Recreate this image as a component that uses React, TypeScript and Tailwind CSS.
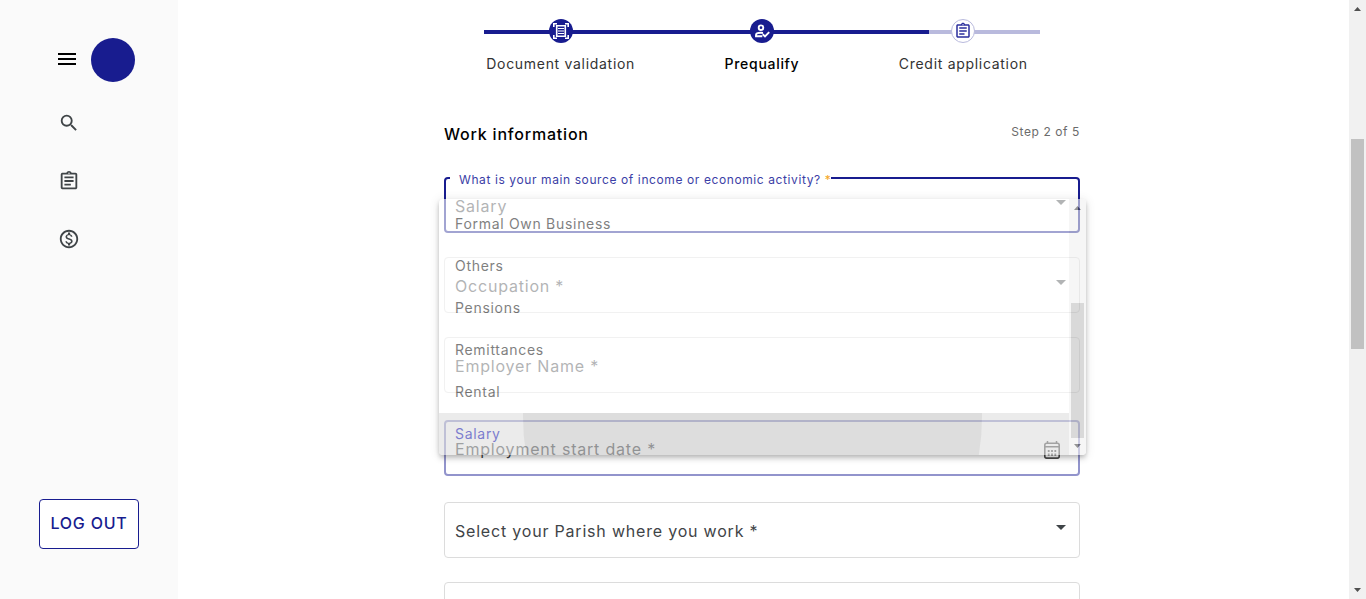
import React from "react";
import {
  MdMenu,
  MdSearch,
  MdOutlineAssignment,
  MdOutlineMonetizationOn,
} from "react-icons/md";

const Caret = () => (
  <svg viewBox="0 0 10 5" className="pointer-events-none h-[5px] w-[10px] shrink-0 -translate-y-[3px] fill-[#3f4447]">
    <path d="M0 0h10L5 5z" />
  </svg>
);

const ScrollArrow = ({ down = false }: { down?: boolean }) => (
  <svg viewBox="0 0 7 4" className={`h-1 w-[7px] fill-[#505050] ${down ? "rotate-180" : ""}`}>
    <path d="M3.5 0L7 4H0z" />
  </svg>
);

const DocumentScanIcon = () => (
  <svg viewBox="0 0 16 16" className="size-4" fill="none" stroke="currentColor" strokeWidth="1.6">
    <path d="M.8 4V.8H4M12 .8h3.200V4M.8 12v3.200H4M12 15.200h3.200V12" />
    <path d="M3.700 2.700h8.600v10.600H3.700z" strokeWidth="1.600" />
    <path d="M5 5.500h6M5 8h6M5 10.500h6" strokeWidth="1.200" />
  </svg>
);

const PersonCheckIcon = () => (
  <svg viewBox="0 0 16 16" className="size-4" fill="none" stroke="currentColor" strokeWidth="1.900">
    <circle cx="7" cy="4.700" r="2.300" />
    <path d="M8.300 13.200H2v-1.100c0-1.400 2.200-2.300 5-2.300.7 0 1.400.1 2 .2" />
    <path d="M8.700 11.300l2.300 2.200 4.200-4.300" />
  </svg>
);

const CalendarIcon = () => (
  <svg viewBox="0 0 16 18" className="mt-[3px] h-[18px] w-4 shrink-0" fill="none" stroke="#4c4c4c">
    <rect x=".8" y="2.200" width="14.400" height="14.900" rx="1.800" strokeWidth="1.600" />
    <path d="M.8 5.800h14.400M3.500 0v3M12.500 0v3" strokeWidth="1.500" />
    <path d="M3.800 10h1.800M7.100 10h1.800M10.400 10h1.800M3.800 13.500h1.800M7.100 13.500h1.800M10.400 13.500h1.800" strokeWidth="1.800" />
  </svg>
);

const fieldBox = "flex h-14 items-center rounded border border-[#dcdcdc] pl-[10px] pr-[13px]";
const control =
  "h-full min-w-0 flex-1 appearance-none bg-transparent pt-[2px] text-base tracking-wider text-[#3f4447] outline-none placeholder:text-[#3f4447] placeholder:opacity-100";

const options = ["Formal Own Business", "Others", "Pensions", "Remittances", "Rental", "Salary"];

function OptionsPanel() {
  return (
    <div className="absolute -left-[5px] -right-[6px] top-[22px] z-10 flex h-64 overflow-hidden rounded bg-white opacity-60 shadow-[0_2px_4px_-1px_rgba(0,0,0,.3),0_4px_5px_0_rgba(0,0,0,.2),0_1px_10px_0_rgba(0,0,0,.18)]">
      <ul role="listbox" aria-label="Source of income" className="flex-1 pt-1">
        {options.map((o) => {
          const active = o === "Salary";
          return (
            <li
              key={o}
              role="option"
              aria-selected={active}
              className={`relative flex h-[42px] items-center overflow-hidden px-4 text-sm tracking-wider ${
                active ? "bg-[#dedede] text-[#2426ae]" : "text-[#2b2b2b]"
              }`}
            >
              {active && (
                <span className="absolute left-[84px] right-[87px] top-1 aspect-square -translate-y-1/2 rounded-full bg-black/10" />
              )}
              <span className="relative">{o}</span>
            </li>
          );
        })}
      </ul>
      <div className="flex w-[17px] flex-col items-center justify-between bg-[#f1f1f1] py-[7px]">
        <ScrollArrow />
        <span className="mb-[6px] mt-auto h-[135px] w-[13px] bg-[#c1c1c1]" />
        <ScrollArrow down />
      </div>
    </div>
  );
}

const Step = ({ label, children, kind }: { label: string; children: React.ReactNode; kind: "done" | "current" | "next" }) => (
  <li className="flex flex-col items-center gap-[11px]">
    <span
      className={`flex size-6 items-center justify-center rounded-full ${
        kind === "next" ? "border border-[#b9badd] bg-white text-[#2b2f9d]" : "bg-[#181c8f] text-white"
      }`}
    >
      {children}
    </span>
    <span className={`whitespace-nowrap text-sm tracking-wider ${kind === "current" ? "font-medium text-black" : "text-[#333]"}`}>{label}</span>
  </li>
);

export default function App() {
  return (
    <div className="flex h-screen overflow-hidden bg-white font-['Inter','Liberation_Sans',sans-serif]">
      <aside className="flex w-[178px] shrink-0 flex-col bg-[#fafafa] pb-[50px] pt-[38px]">
        <div className="flex items-center gap-3 pl-[55px]">
          <button aria-label="Menu" className="-mt-[2px] text-black">
            <MdMenu className="size-6" />
          </button>
          <span className="size-11 rounded-full bg-[#181c8f]" />
        </div>
        <nav className="mt-[30px] flex flex-col gap-9 pl-[58px] text-[#3f4447]">
          <a href="#search" aria-label="Search"><MdSearch className="size-[22px]" /></a>
          <a href="#applications" aria-label="Applications"><MdOutlineAssignment className="size-[22px]" /></a>
          <a href="#payments" aria-label="Payments"><MdOutlineMonetizationOn className="size-[22px]" /></a>
        </nav>
        <button className="mx-auto mt-auto h-[50px] w-[100px] whitespace-nowrap rounded border border-[#181c8f] bg-white pb-[2px] text-base font-medium tracking-wider text-[#181c8f]">
          LOG OUT
        </button>
      </aside>

      <main className="flex min-w-0 flex-1 justify-center overflow-hidden pr-[3px]">
        <div className="w-full max-w-[636px]">
          <div className="mx-4 grid pt-[19px]">
            <div className="col-start-1 row-start-1 mx-6 mt-[11px] flex h-1 bg-[#b9badd]">
              <span className="w-4/5 bg-[#181c8f]" />
            </div>
            <ol className="col-start-1 row-start-1 grid grid-cols-3">
              <Step kind="done" label="Document validation"><DocumentScanIcon /></Step>
              <Step kind="current" label="Prequalify"><PersonCheckIcon /></Step>
              <Step kind="next" label="Credit application"><MdOutlineAssignment className="size-[18px]" /></Step>
            </ol>
          </div>

          <header className="mt-12 flex justify-between">
            <h1 className="text-base font-medium tracking-wider text-black">Work information</h1>
            <p className="text-xs leading-5 tracking-wider text-[#6b6b6b]">Step 2 of 5</p>
          </header>

          <form className="mt-[31px] flex flex-col gap-6">
            <div className="relative">
              <div className="flex h-14 items-center rounded border-2 border-[#181c8f] pl-[9px] pr-3">
                <select id="income" defaultValue="Salary" className={control}>
                  {options.map((o) => <option key={o}>{o}</option>)}
                </select>
                <Caret />
              </div>
              <label htmlFor="income" className="absolute left-[6px] -top-[5px] whitespace-nowrap bg-white pl-[9px] text-xs tracking-wider text-[#3b3ea6]">
                What is your main source of income or economic activity? <span className="text-[#f5a623]">*</span>
              </label>
              <OptionsPanel />
            </div>
            <div className={fieldBox}>
              <select aria-label="Occupation" className={control}><option>Occupation *</option></select>
              <Caret />
            </div>
            <div className={fieldBox}>
              <input aria-label="Employer Name" placeholder="Employer Name *" className={control} />
            </div>
            <div className="pb-[2px] pt-[3px]">
              <div className="flex h-14 items-center rounded border-2 border-[#9294cc] pl-[9px] pr-[18px]">
                <input aria-label="Employment start date" placeholder="Employment start date *" className={control} />
                <CalendarIcon />
              </div>
            </div>
            <div className={fieldBox}>
              <select aria-label="Parish where you work" className={control}><option>Select your Parish where you work *</option></select>
              <Caret />
            </div>
            <div className={fieldBox}>
              <input aria-label="Work address" className={control} />
            </div>
          </form>
        </div>
      </main>

      <div className="flex w-[17px] shrink-0 flex-col items-center bg-[#f1f1f1] pb-[7px] pt-[7px]">
        <ScrollArrow />
        <span className="mt-[128px] h-[210px] w-[13px] bg-[#c1c1c1]" />
        <span className="mt-auto flex"><ScrollArrow down /></span>
      </div>
    </div>
  );
}
